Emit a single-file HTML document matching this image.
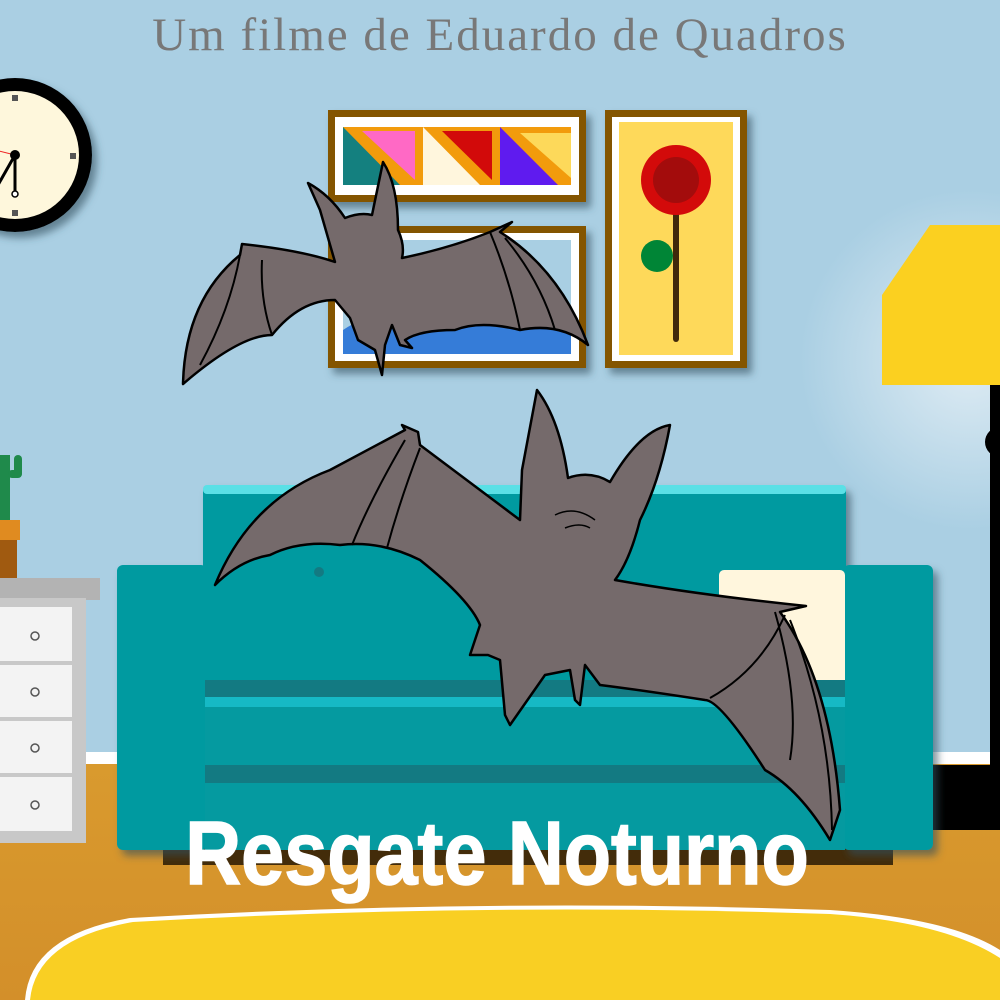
<!DOCTYPE html>
<html><head><meta charset="utf-8"><style>
html,body{margin:0;padding:0;width:1000px;height:1000px;overflow:hidden;background:#aacfe3}
svg{display:block}
</style></head><body>
<svg width="1000" height="1000" viewBox="0 0 1000 1000" xmlns="http://www.w3.org/2000/svg">
<defs>
<radialGradient id="glow" cx="970" cy="360" r="170" gradientUnits="userSpaceOnUse">
<stop offset="0" stop-color="#dfecf4"/><stop offset="1" stop-color="#aacfe3"/></radialGradient>
<linearGradient id="floor" x1="0" y1="0" x2="0" y2="1"><stop offset="0" stop-color="#d99a2e"/><stop offset="1" stop-color="#d38f2a"/></linearGradient>
<filter id="sh" x="-20%" y="-20%" width="140%" height="140%"><feDropShadow dx="5" dy="6" stdDeviation="4" flood-color="#34505f" flood-opacity="0.6"/></filter>
</defs>
<rect width="1000" height="1000" fill="#aacfe3"/>
<rect x="780" y="180" width="220" height="570" fill="url(#glow)"/>
<rect x="0" y="752" width="1000" height="12" fill="#ffffff"/>
<rect x="0" y="764" width="1000" height="236" fill="url(#floor)"/>
<text x="500" y="50" text-anchor="middle" font-family="Liberation Serif, serif" font-size="47" fill="#787878" letter-spacing="2">Um filme de Eduardo de Quadros</text>
<!-- clock -->
<circle cx="15" cy="155" r="77" fill="#000" filter="url(#sh)"/>
<circle cx="15" cy="155" r="64" fill="#fef7dc"/>
<rect x="12" y="95" width="6" height="6" fill="#555"/>
<rect x="12" y="210" width="6" height="6" fill="#555"/>
<rect x="70" y="153" width="6" height="6" fill="#555"/>
<line x1="15" y1="155" x2="-5" y2="150" stroke="#e22" stroke-width="1"/>
<line x1="15" y1="155" x2="15" y2="193" stroke="#000" stroke-width="3"/>
<line x1="15" y1="155" x2="-2" y2="185" stroke="#000" stroke-width="3"/>
<circle cx="15" cy="155" r="5" fill="#000"/>
<circle cx="15" cy="194" r="3" fill="#fff" stroke="#000" stroke-width="1.5"/>
<!-- frame 1 -->
<g filter="url(#sh)"><rect x="328" y="110" width="258" height="92" fill="#845505"/></g>
<rect x="335" y="117" width="244" height="78" fill="#fff"/>
<rect x="343" y="127" width="80" height="58" fill="#14807f"/>
<polygon points="343,127 423,127 423,185 400,185" fill="#f29b0c"/>
<polygon points="362,131 415,131 415,180" fill="#ff69c5"/>
<rect x="423" y="127" width="77" height="58" fill="#fff6dd"/>
<polygon points="423,127 500,127 500,185 480,185" fill="#f29b0c"/>
<polygon points="442,131 492,131 492,180" fill="#d20a0a"/>
<rect x="500" y="127" width="71" height="58" fill="#5f1bef"/>
<polygon points="500,127 571,127 571,185 558,185" fill="#f29b0c"/>
<polygon points="520,133 571,133 571,178" fill="#fdd95a"/>
<!-- frame 2 -->
<g filter="url(#sh)"><rect x="328" y="226" width="258" height="142" fill="#845505"/></g>
<rect x="335" y="233" width="244" height="128" fill="#fff"/>
<rect x="343" y="240" width="228" height="114" fill="#a9cfe3"/>
<path d="M343,330 Q380,305 420,322 Q460,305 500,318 Q540,305 571,318 L571,354 L343,354Z" fill="#357cd8"/>
<!-- frame 3 -->
<g filter="url(#sh)"><rect x="605" y="110" width="142" height="258" fill="#845505"/></g>
<rect x="612" y="117" width="128" height="244" fill="#fff"/>
<rect x="619" y="122" width="114" height="233" fill="#fed95a"/>
<rect x="673" y="210" width="6" height="132" rx="3" fill="#40290b"/>
<circle cx="657" cy="256" r="16" fill="#008536"/>
<circle cx="676" cy="180" r="35" fill="#d30a0a"/>
<circle cx="676" cy="180" r="23" fill="#a30c0c"/>
<!-- lamp -->
<rect x="990" y="385" width="10" height="440" fill="#000"/>
<circle cx="1000" cy="442" r="15" fill="#000"/>
<rect x="930" y="765" width="70" height="65" fill="#000"/>
<polygon points="930,225 1000,225 1000,385 882,385 882,295" fill="#fbd020"/>
<path d="M882,380 q6,8 12,0 q6,8 12,0 q6,8 12,0 q6,8 12,0 q6,8 12,0 q6,8 12,0 q6,8 12,0 q6,8 12,0 q6,8 12,0 q6,8 12,0" fill="#fbd020"/>
<!-- dresser & plant -->
<rect x="0" y="455" width="10" height="75" fill="#1f8a4b"/>
<rect x="8" y="470" width="14" height="8" rx="4" fill="#1f8a4b"/>
<rect x="14" y="455" width="8" height="22" rx="4" fill="#1f8a4b"/>
<rect x="0" y="520" width="20" height="20" fill="#e08b20"/>
<rect x="0" y="540" width="17" height="45" fill="#a05a10"/>
<rect x="0" y="578" width="100" height="22" fill="#b3b3b3"/>
<rect x="0" y="598" width="86" height="245" fill="#c8c8c8"/>
<g fill="#f3f3f3"><rect x="0" y="607" width="72" height="54"/><rect x="0" y="665" width="72" height="52"/><rect x="0" y="721" width="72" height="52"/><rect x="0" y="777" width="72" height="54"/></g>
<g fill="none" stroke="#555" stroke-width="1.5"><circle cx="35" cy="636" r="4"/><circle cx="35" cy="692" r="4"/><circle cx="35" cy="748" r="4"/><circle cx="35" cy="805" r="4"/></g>
<!-- sofa -->
<rect x="163" y="845" width="730" height="20" fill="#432c0a"/>
<g filter="url(#sh)">
<rect x="203" y="485" width="643" height="215" rx="6" fill="#059aa0"/>
<rect x="117" y="565" width="90" height="285" rx="6" fill="#059aa0"/>
<rect x="843" y="565" width="90" height="285" rx="6" fill="#059aa0"/>
</g>
<rect x="203" y="485" width="643" height="9" rx="4" fill="#5ae0e6"/>
<rect x="719" y="570" width="126" height="125" rx="5" fill="#fff6dd"/>
<rect x="205" y="680" width="640" height="17" fill="#137a82"/>
<rect x="205" y="697" width="640" height="10" fill="#16b9c5"/>
<rect x="205" y="707" width="640" height="143" fill="#059aa0"/>
<rect x="205" y="765" width="640" height="18" fill="#137a82"/>
<circle cx="319" cy="572" r="5" fill="#137a82"/>
<!-- rug -->
<path d="M25,1000 Q30,935 130,918 Q480,898 830,910 Q950,918 1000,950 L1000,1000Z" fill="#fff"/>
<path d="M30,1000 Q36,939 133,922 Q480,902 830,914 Q945,922 1000,958 L1000,1000Z" fill="#f9cf23"/>
<!-- small bat -->
<g fill="#756a6b" stroke="#000" stroke-width="2.5" stroke-linejoin="round">
<path d="M183,384 Q185,300 240,255 L242,244 Q300,250 335,262 L320,210 L308,183 Q330,195 345,218 Q360,212 372,215 L383,162 Q398,185 398,230 Q405,245 402,258 Q450,248 490,232 L512,222 L500,232 Q560,270 588,345 Q560,322 520,330 Q480,320 455,330 Q420,330 405,340 L412,348 L400,345 L392,325 L385,345 L382,375 L375,350 L358,340 L350,318 L335,300 Q300,300 272,335 Q240,335 183,384Z"/>
<path d="M240,255 Q230,310 200,365 M262,260 Q260,300 272,335 M490,232 Q510,280 520,330 M505,238 Q540,280 555,330" fill="none" stroke-width="2"/>
</g>
<!-- big bat -->
<g fill="#756a6b" stroke="#000" stroke-width="2.5" stroke-linejoin="round">
<path d="M215,585 Q250,500 330,470 L405,430 L402,425 L418,432 L420,445 Q480,490 520,520 L522,470 L537,390 Q560,420 568,478 Q590,470 610,482 Q640,430 670,425 Q660,480 640,520 Q630,560 615,580 Q700,595 806,606 L780,612 Q830,680 840,810 L830,840 Q800,790 765,770 Q720,700 705,700 Q640,690 600,685 L585,665 L580,705 L575,700 L570,670 L545,675 L510,725 L505,715 L500,660 L488,655 L470,655 L475,640 L480,625 Q470,600 420,560 Q380,540 340,545 Q300,540 270,555 Q240,560 215,585Z"/>
<path d="M405,440 Q370,500 352,545 M420,448 Q400,500 387,548 M785,615 Q760,670 710,698 M775,612 Q800,700 790,760 M790,620 Q830,720 832,830" fill="none" stroke-width="2"/>
<path d="M555,515 Q575,505 595,520 M565,528 Q580,522 590,528" fill="none" stroke-width="1.5"/>
</g>
<!-- title -->
<text x="497" y="884" text-anchor="middle" font-family="Liberation Sans Narrow, Liberation Sans, sans-serif" font-weight="bold" font-size="90" fill="#fff" stroke="#fff" stroke-width="1.5" transform="translate(497 0) scale(0.86 1) translate(-497 0)">Resgate Noturno</text>
</svg>
</body></html>
